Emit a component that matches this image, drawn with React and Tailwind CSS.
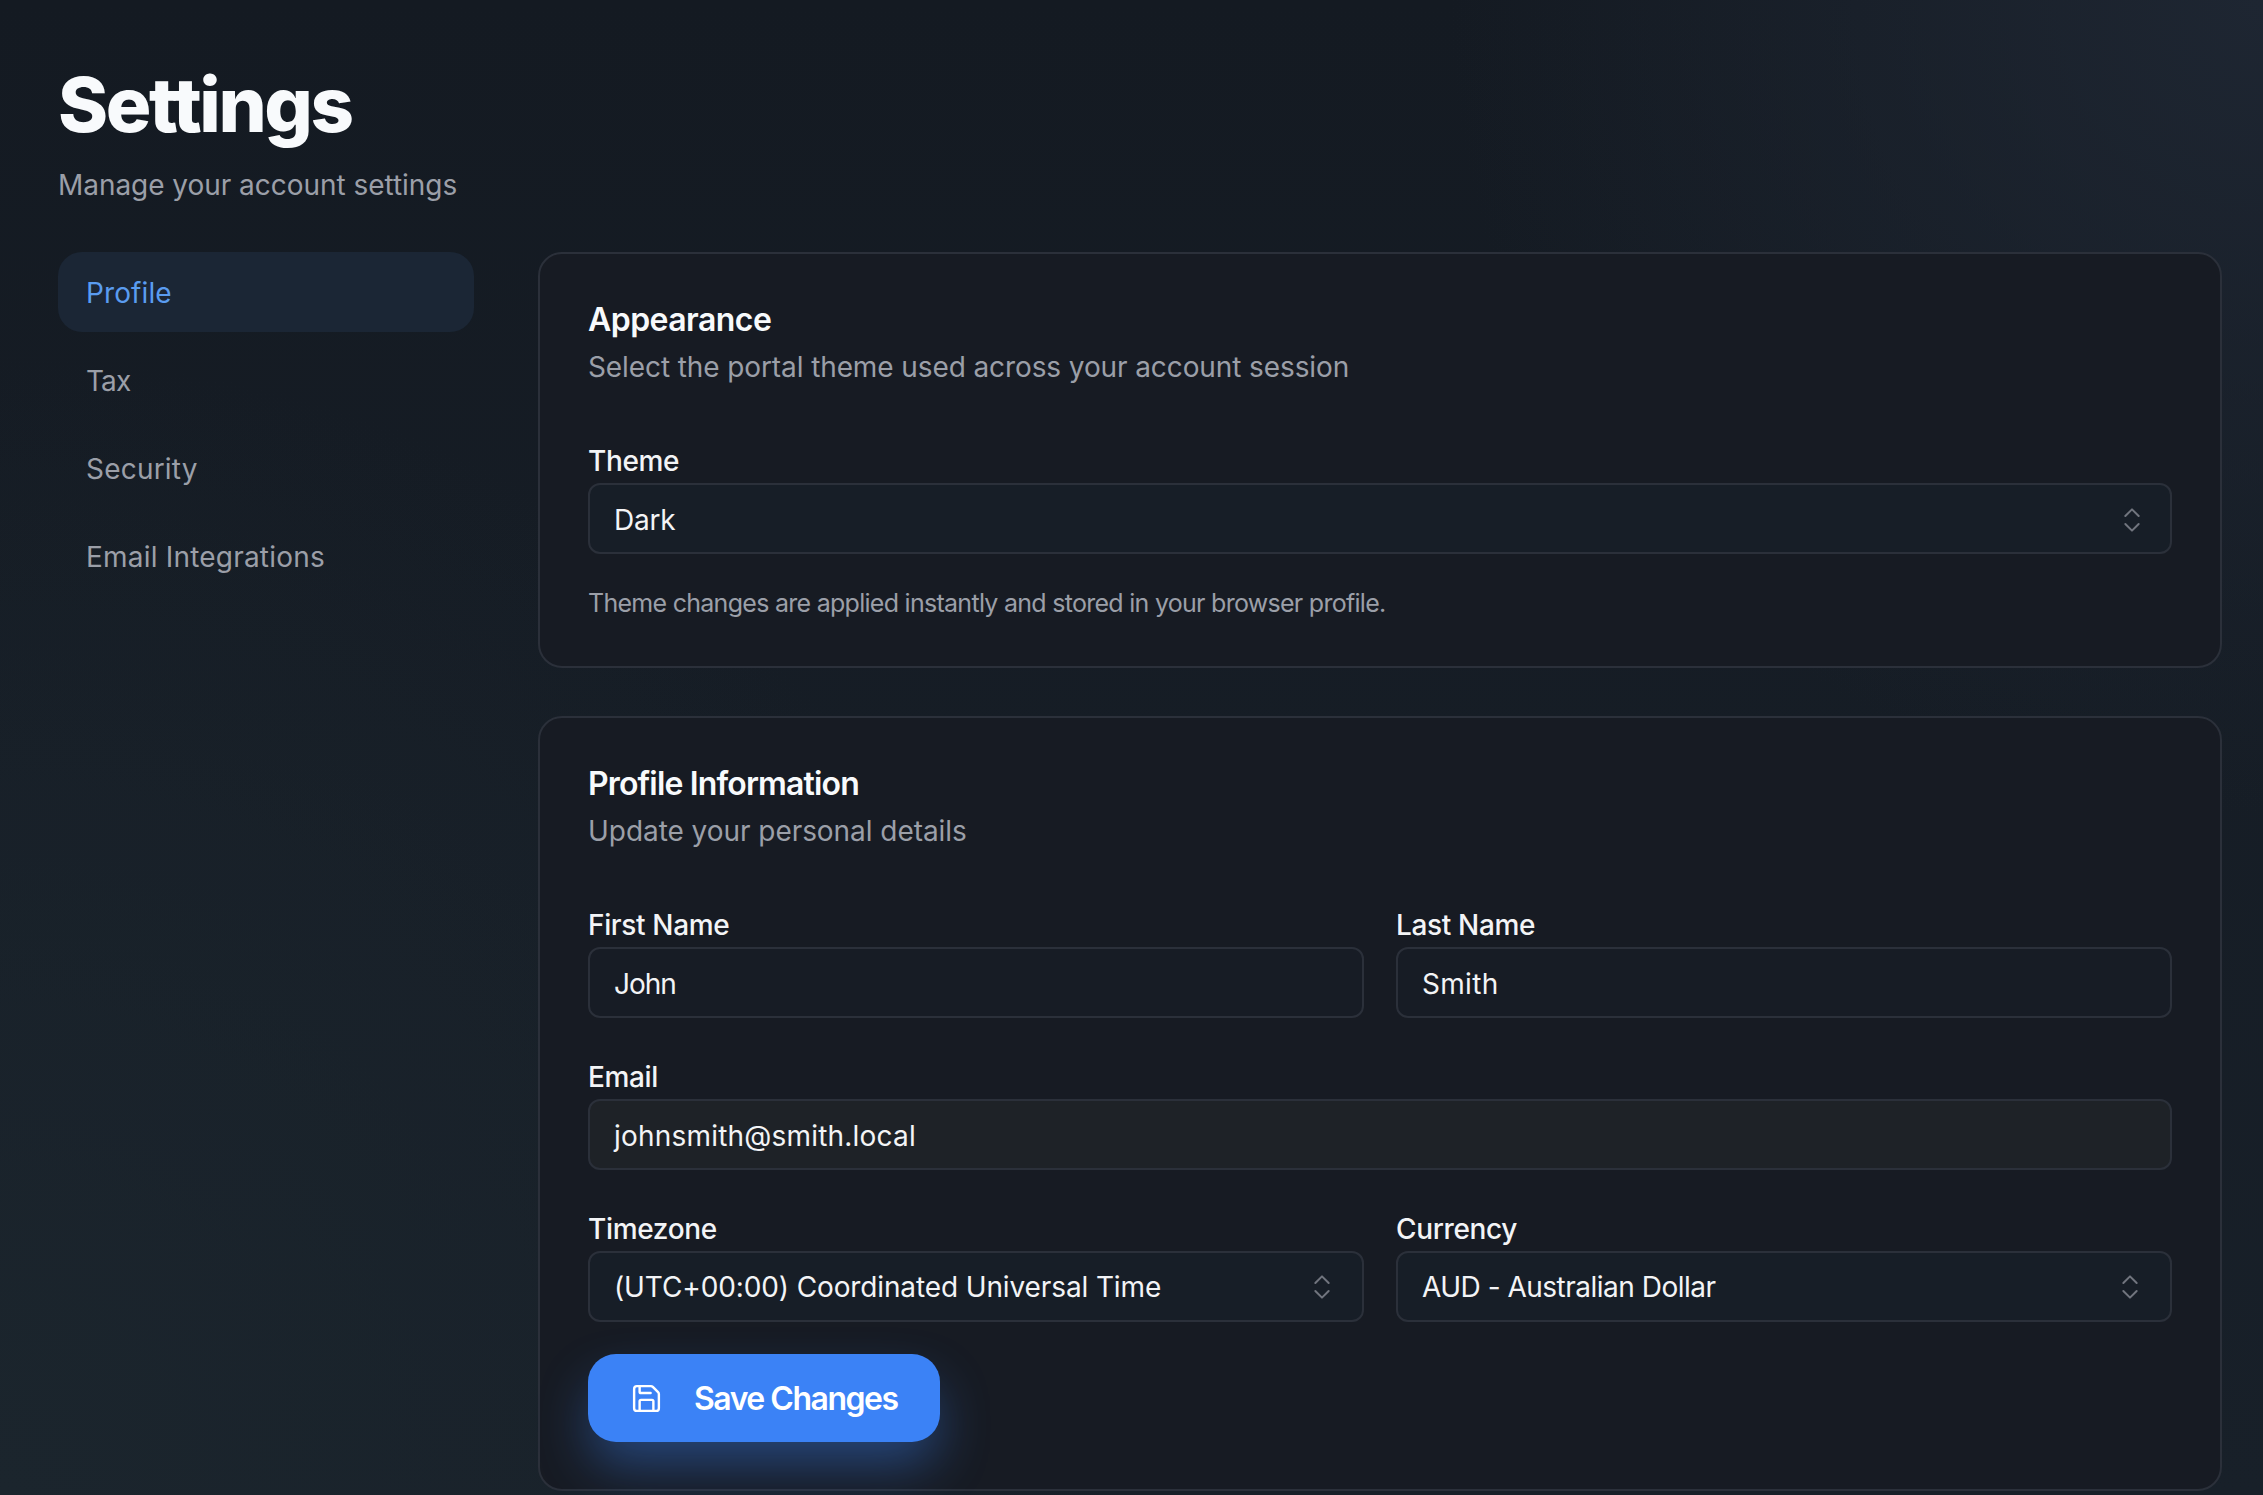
import { ChevronsUpDown, Save } from 'lucide-react';

const tabs = [
  { name: 'Profile', track: 'tracking-[0.1px]' },
  { name: 'Tax', track: 'tracking-[-0.9px]' },
  { name: 'Security', track: 'tracking-[0.2px]' },
  { name: 'Email Integrations', track: 'tracking-[0.2px]' },
];

function Label({ children }) {
  return <label className="block h-[29px] text-[28px] leading-[29px] font-medium tracking-[-0.35px] text-[#f3f4f6]">{children}</label>;
}

function Field({ label, value, disabled, track }) {
  return (
    <div className="min-w-0 flex-1">
      <Label>{label}</Label>
      <div className={`mt-[7px] flex h-[71px] items-center rounded-[12px] border-2 border-[#2b303a] pl-[24px] pt-[2px] text-[28px] text-[#f3f4f6] ${track} ${disabled ? 'bg-[#1e2227]' : 'bg-[#171c25]'}`}>
        {value}
      </div>
    </div>
  );
}

function SelectField({ label, value, track, pad }) {
  return (
    <div className="min-w-0 flex-1">
      <Label>{label}</Label>
      <div className={`mt-[7px] flex h-[71px] items-center justify-between rounded-[12px] border-2 border-[#2b303a] bg-[#171e27] pl-[24px] text-[28px] text-[#f3f4f6] ${track} ${pad}`}>
        <span>{value}</span>
        <ChevronsUpDown size={32} strokeWidth={1.5} className="text-[#71757e]" />
      </div>
    </div>
  );
}

export default function App() {
  return (
    <div className="h-[1495px] overflow-hidden bg-[radial-gradient(circle_at_100%_0%,#1e2632_0%,transparent_30%),radial-gradient(circle_at_0%_100%,#1b252d_0%,transparent_42%),linear-gradient(#141a22,#182029)] pl-[58px] pr-[41px] pt-[58px] font-['Inter',sans-serif]">
      <h1 className="h-[92px] text-[76px] leading-[92px] font-extrabold tracking-[-2.4px] text-[#f8fafc]">Settings</h1>
      <p className="mt-[14px] text-[28px] leading-[42px] tracking-[-0.04px] text-[#9b9fa8]">Manage your account settings</p>

      <div className="mt-[46px] flex gap-[64px]">
        <nav className="flex w-[416px] shrink-0 flex-col gap-[8px]">
          {tabs.map((t, i) => (
            <div
              key={t.name}
              className={`flex h-[80px] items-center rounded-[24px] pl-[28px] pt-[2px] text-[28px] ${t.track} ${i === 0 ? 'bg-[#1b2635] text-[#5a9cf0]' : 'text-[#9b9fa8]'}`}
            >
              {t.name}
            </div>
          ))}
        </nav>

        <main className="flex min-w-0 flex-1 flex-col gap-[48px]">
          <section className="h-[416px] rounded-[24px] border-2 border-[#2b303a] bg-[#171b23] px-[48px] pt-[46px]">
            <h2 className="text-[32px] leading-[40px] font-semibold tracking-[-0.55px] text-[#f8fafc]">Appearance</h2>
            <p className="mt-[7px] text-[28px] leading-[40px] tracking-[-0.1px] text-[#9b9fa8]">Select the portal theme used across your account session</p>
            <div className="mt-[60px]">
              <SelectField label="Theme" value="Dark" track="tracking-[-0.2px] pt-[3px]" pad="pr-[22px]" />
            </div>
            <p className="mt-[31px] text-[25px] leading-[36px] tracking-[-0.72px] text-[#9b9fa8]">Theme changes are applied instantly and stored in your browser profile.</p>
          </section>

          <section className="h-[775px] rounded-[24px] border-2 border-[#2b303a] bg-[#171b23] px-[48px] pt-[46px]">
            <h2 className="text-[32px] leading-[40px] font-semibold tracking-[-0.85px] text-[#f8fafc]">Profile Information</h2>
            <p className="mt-[7px] text-[28px] leading-[40px] tracking-[-0.05px] text-[#9b9fa8]">Update your personal details</p>
            <div className="mt-[60px] flex gap-[32px]">
              <Field label="First Name" value="John" track="tracking-[-1px]" />
              <Field label="Last Name" value="Smith" track="tracking-[0.3px]" />
            </div>
            <div className="mt-[45px]">
              <Field label="Email" value="johnsmith@smith.local" disabled track="tracking-[0.2px]" />
            </div>
            <div className="mt-[45px] flex gap-[32px]">
              <SelectField label="Timezone" value="(UTC+00:00) Coordinated Universal Time" track="tracking-[-0.12px]" pad="pr-[24px]" />
              <SelectField label="Currency" value="AUD - Australian Dollar" track="tracking-[-0.5px]" pad="pr-[24px]" />
            </div>
            <button className="mt-[32px] flex h-[88px] w-[352px] items-center gap-[31px] rounded-[28px] bg-[#3b82f6] pl-[42px] text-[32px] font-semibold tracking-[-1.5px] text-white shadow-[0_26px_52px_-4px_rgba(59,130,246,0.42)]">
              <Save size={33} strokeWidth={1.75} />
              <span className="pt-[2px]">Save Changes</span>
            </button>
          </section>
        </main>
      </div>
    </div>
  );
}
